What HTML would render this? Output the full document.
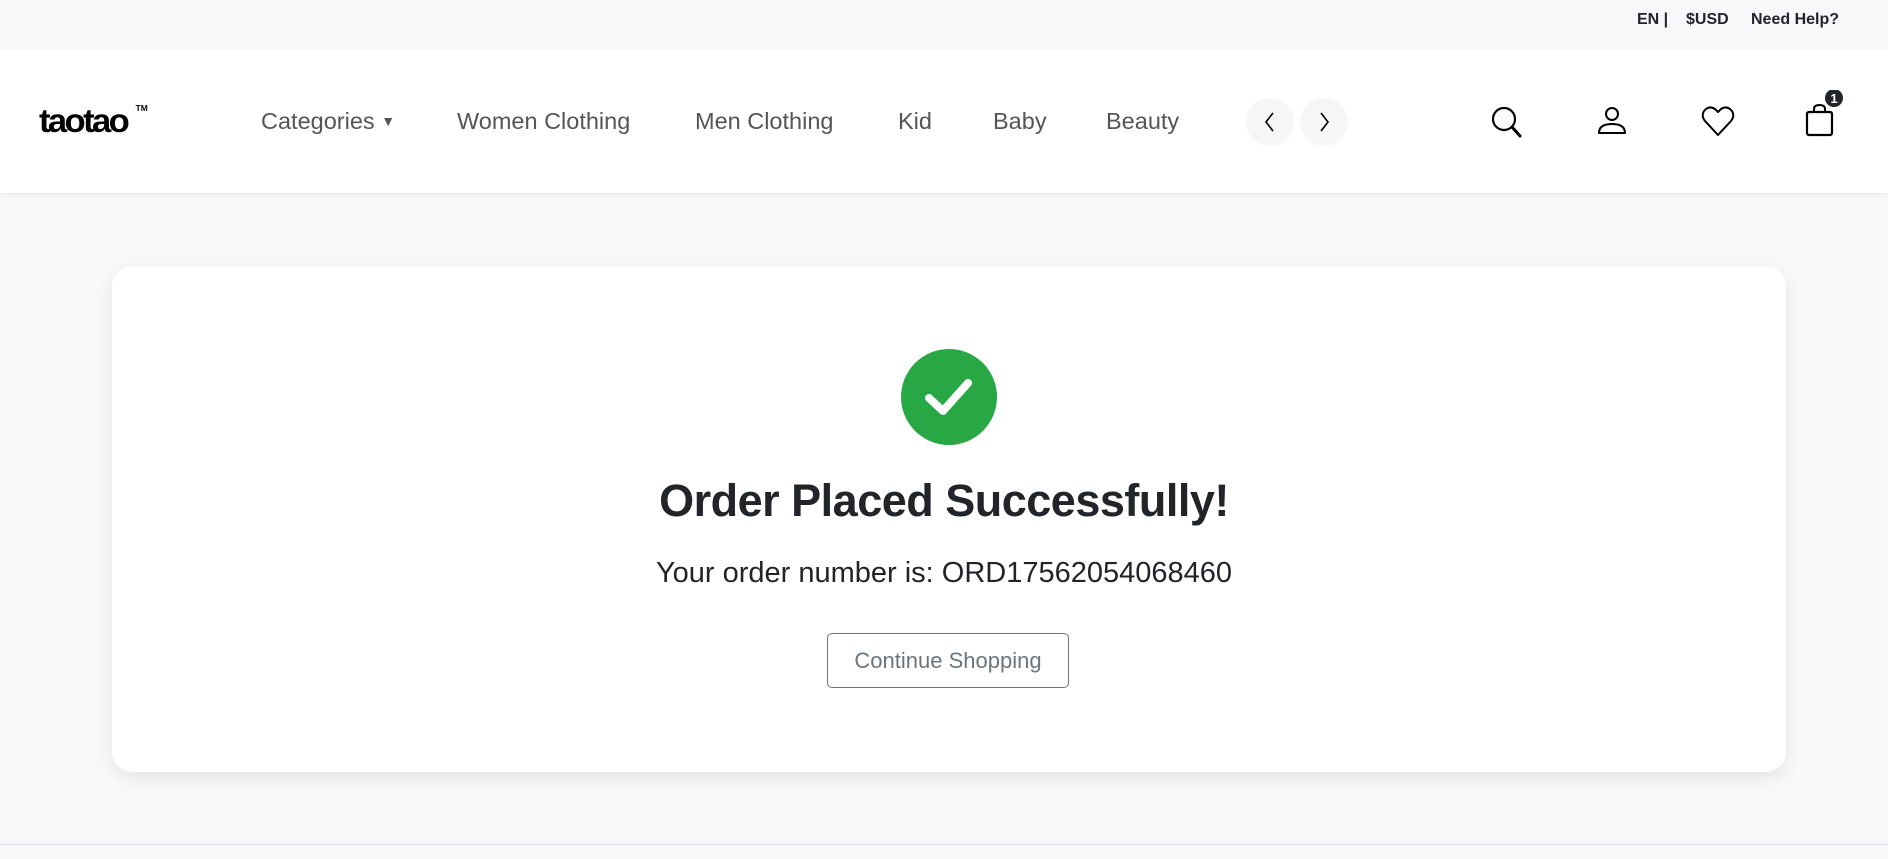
<!DOCTYPE html>
<html><head><meta charset="utf-8"><style>
*{margin:0;padding:0;box-sizing:border-box}
body{width:1888px;height:859px;background:#f7f8fa;font-family:"Liberation Sans",Arial,sans-serif;position:relative;overflow:hidden}
.top{position:absolute;left:0;top:0;width:1888px;height:50px;background:#f7f8fa}
.top span{position:absolute;top:11px;font-size:16px;font-weight:bold;color:#212529}
.hdr{position:absolute;left:0;top:50px;width:1888px;height:143px;background:#fff;box-shadow:0 2px 4px rgba(0,0,0,.06)}
.logo{position:absolute;left:39px;top:52px;font-size:33px;font-weight:900;letter-spacing:-2.5px;color:#000;transform:scaleX(1.05);transform-origin:left}
.logo sup{font-size:8px;position:absolute;top:2px;left:92px;letter-spacing:0}
.nav{position:absolute;top:58px;font-size:23.5px;color:#555}
.arr{position:absolute;top:48px;width:48px;height:48px;border-radius:50%;background:#f5f6f8}
.ic{position:absolute}
.card{position:absolute;left:112px;top:266px;width:1674px;height:506px;background:#fff;border-radius:20px;box-shadow:0 6px 16px rgba(0,0,0,.08)}
.check{position:absolute;left:901px;top:349px;width:96px;height:96px;border-radius:50%;background:#28a745}
h1{position:absolute;left:0;width:1888px;top:475px;text-align:center;font-size:45px;font-weight:bold;color:#212529;letter-spacing:-0.5px}
.num{position:absolute;left:0;width:1888px;top:557px;text-align:center;font-size:29px;color:#212529;font-weight:300}
.btn{position:absolute;left:827px;top:633px;width:242px;height:55px;border:1px solid #6c757d;border-radius:5px;text-align:center;line-height:53px;font-size:22px;color:#6c757d;background:#fff}
.bl{position:absolute;left:0;top:844px;width:1888px;height:1px;background:#dee2e6}
</style></head><body>
<div class="top"><span style="left:1637px">EN |</span><span style="left:1686px">$USD</span><span style="left:1751px">Need Help?</span></div>
<div class="hdr">
<div class="logo">taotao<sup>TM</sup></div>
<div class="nav" style="left:261px">Categories <span style="font-size:14px;position:relative;top:-3px">▼</span></div>
<div class="nav" style="left:457px">Women Clothing</div>
<div class="nav" style="left:695px">Men Clothing</div>
<div class="nav" style="left:898px">Kid</div>
<div class="nav" style="left:993px">Baby</div>
<div class="nav" style="left:1106px">Beauty</div>
<div class="arr" style="left:1246px"><svg width="48" height="48"><path d="M27 15 L20 24 L27 33" fill="none" stroke="#000" stroke-width="1.6"/></svg></div>
<div class="arr" style="left:1300px"><svg width="48" height="48"><path d="M21 15 L28 24 L21 33" fill="none" stroke="#000" stroke-width="1.6"/></svg></div>
<svg class="ic" style="left:1490px;top:54px" width="36" height="36"><circle cx="14" cy="15" r="11" fill="none" stroke="#000" stroke-width="2.2"/><path d="M22 23 L30 32" stroke="#000" stroke-width="3" stroke-linecap="round"/></svg>
<svg class="ic" style="left:1596px;top:56px" width="34" height="32"><circle cx="16" cy="8" r="6" fill="none" stroke="#000" stroke-width="2"/><path d="M3 27 Q3 18 16 18 Q29 18 29 27 Z" fill="none" stroke="#000" stroke-width="2" stroke-linejoin="round"/></svg>
<svg class="ic" style="left:1700px;top:54px" width="36" height="34"><path d="M18 31 L5 17 Q1 12 4 7 Q9 1 15 5 L18 8 L21 5 Q27 1 32 7 Q35 12 31 17 Z" fill="none" stroke="#000" stroke-width="2" stroke-linejoin="round"/></svg>
<svg class="ic" style="left:1804px;top:40px" width="44" height="48"><rect x="3" y="22" width="25" height="23" rx="2" fill="none" stroke="#000" stroke-width="2.2"/><path d="M10 22 V19 Q10 15 15.5 15 Q21 15 21 19 V22" fill="none" stroke="#000" stroke-width="2"/><circle cx="30" cy="8" r="9" fill="#212529"/><text x="30" y="13" text-anchor="middle" font-size="13" font-weight="bold" fill="#fff" font-family="Liberation Sans">1</text></svg>
</div>
<div class="card"></div>
<div class="check"><svg width="96" height="96"><path d="M28 49 L42 62 L67 34" fill="none" stroke="#fff" stroke-width="8" stroke-linecap="round" stroke-linejoin="round"/></svg></div>
<h1>Order Placed Successfully!</h1>
<div class="num">Your order number is: <span style="font-weight:normal">ORD17562054068460</span></div>
<div class="btn">Continue Shopping</div>
<div class="bl"></div>
</body></html>
